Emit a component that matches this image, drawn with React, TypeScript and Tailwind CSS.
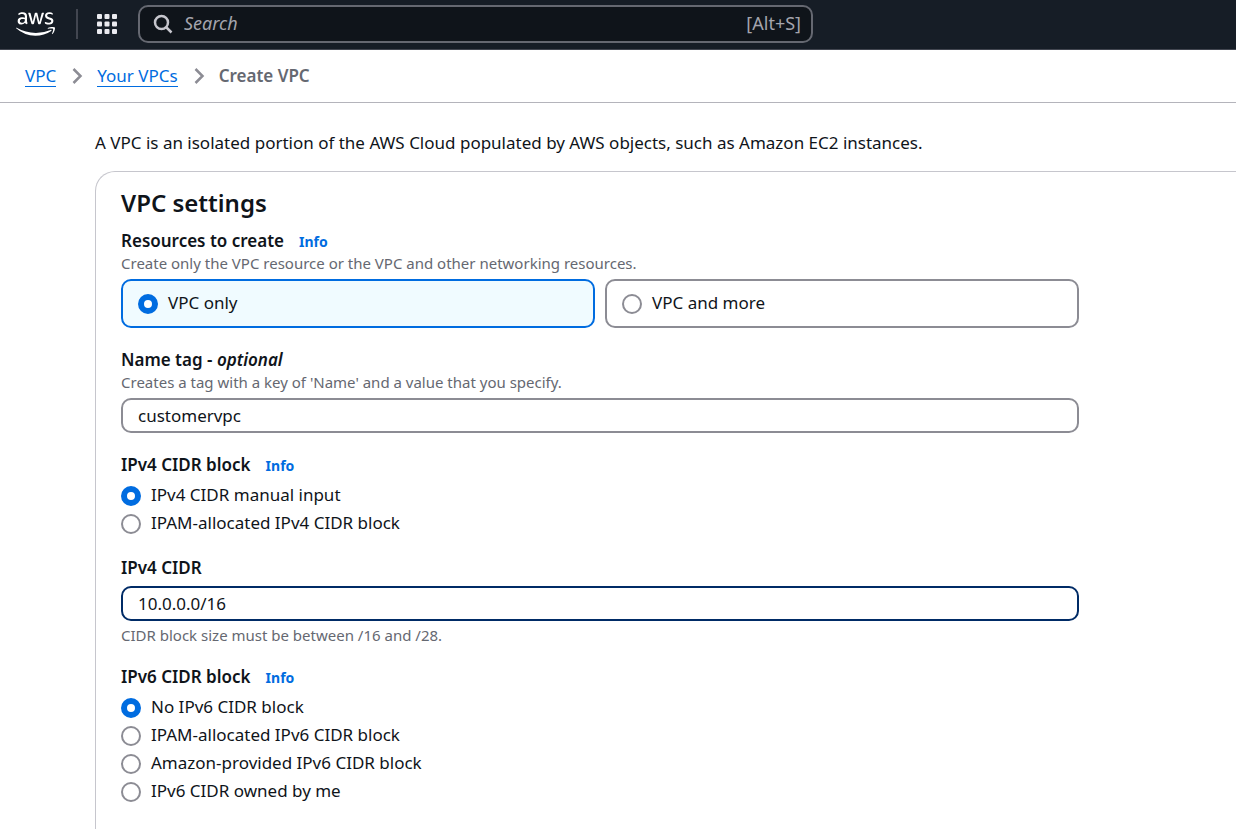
import { useState, type ReactNode } from "react";
import { FaAws } from "react-icons/fa";

function Info() {
  return (
    <a href="#info" className="pt-0.5 text-sm leading-[22px] font-bold text-[#006ce0]">
      Info
    </a>
  );
}

function Heading({ id, htmlFor, children, info }: { id?: string; htmlFor?: string; children: ReactNode; info?: boolean }) {
  return (
    <div className="flex h-6 items-center gap-[15px]">
      {htmlFor ? (
        <label htmlFor={htmlFor} className="leading-6 font-semibold">
          {children}
        </label>
      ) : (
        <span id={id} className="leading-6 font-semibold">
          {children}
        </span>
      )}
      {info && <Info />}
    </div>
  );
}

const radioClass =
  "size-5 shrink-0 appearance-none rounded-full border-2 border-[#8c8c94] bg-white checked:border-6 checked:border-[#006ce0]";

function Tile({ label, checked, onSelect }: { label: string; checked: boolean; onSelect: () => void }) {
  return (
    <label
      className={
        "flex h-[49px] items-center gap-[10px] rounded-[10px] border-2 px-[15px] " +
        (checked ? "border-[#006ce0] bg-[#f0fbff]" : "border-[#8c8c94] bg-white")
      }
    >
      <input type="radio" name="resources" className={radioClass} checked={checked} onChange={onSelect} />
      <span className="pb-0.5 leading-6">{label}</span>
    </label>
  );
}

function RadioList({ name, labelledBy, options }: { name: string; labelledBy: string; options: string[] }) {
  const [value, setValue] = useState(options[0]);
  return (
    <div role="radiogroup" aria-labelledby={labelledBy} className="mt-[5px]">
      {options.map((o) => (
        <label key={o} className="flex h-7 items-center gap-[10px]">
          <input type="radio" name={name} className={radioClass} checked={value === o} onChange={() => setValue(o)} />
          <span className="pb-0.5 leading-6">{o}</span>
        </label>
      ))}
    </div>
  );
}

function Chevron() {
  return (
    <svg viewBox="0 0 12 18" className="h-[18px] w-3" fill="none" stroke="#8c8c94" strokeWidth="2.5" aria-hidden="true">
      <path d="M2.5 2l7 7-7 7" />
    </svg>
  );
}

export default function App() {
  const [resource, setResource] = useState("VPC only");
  return (
    <div className="flex h-screen flex-col overflow-hidden bg-white font-['Noto_Sans',sans-serif] text-[17px] text-[#0f141a]">
      <header className="flex h-[50px] shrink-0 items-center border-b border-[#424650] bg-[#161d26] pb-px pl-4">
        <a href="#home" aria-label="AWS home" className="text-white">
          <FaAws className="h-8 w-[39px]" />
        </a>
        <div className="ml-[21px] h-[30px] w-0.5 bg-[#424650]" />
        <button type="button" aria-label="Services" className="ml-[19px]">
          <svg viewBox="0 0 20 20" className="size-5" fill="#ebebf0">
            {[0, 7.5, 15].map((y) => [0, 7.5, 15].map((x) => <rect key={`${x}-${y}`} x={x} y={y} width="5" height="5" rx="1" />))}
          </svg>
        </button>
        <div className="ml-[21px] flex h-[38px] w-[675px] items-center rounded-[10px] border-2 border-[#656871] bg-[#0f141a] pr-2.5 pl-[13px]">
          <svg viewBox="0 0 20 20" className="size-5 shrink-0" fill="none" stroke="#c6c6cd" strokeWidth="2.5" aria-hidden="true">
            <circle cx="8.5" cy="8.5" r="6.5" />
            <path d="M13 13l5.5 5.5" />
          </svg>
          <input
            type="search"
            aria-label="Search"
            placeholder="Search"
            className="ml-[11px] min-w-0 flex-1 bg-transparent pb-0.5 text-lg leading-6 text-white outline-none placeholder:text-[#a4a4ad] placeholder:italic"
          />
          <span className="pb-0.5 text-lg leading-6 text-[#a4a4ad]">[Alt+S]</span>
        </div>
      </header>

      <nav aria-label="Breadcrumb" className="flex h-[53px] shrink-0 items-center border-b border-[#b4b4bb] pl-[25px]">
        <a href="#vpc" className="border-b border-[#006ce0] leading-5 text-[#006ce0]">
          VPC
        </a>
        <span className="mr-3.5 ml-[15px]">
          <Chevron />
        </span>
        <a href="#vpcs" className="border-b border-[#006ce0] leading-5 text-[#006ce0]">
          Your VPCs
        </a>
        <span className="mr-3.5 ml-[15px]">
          <Chevron />
        </span>
        <span className="leading-5 font-semibold text-[#656871]">Create VPC</span>
      </nav>

      <main className="min-h-0 flex-1 pl-[95px]">
        <p className="pt-7 pb-4 leading-6">
          A VPC is an isolated portion of the AWS Cloud populated by AWS objects, such as Amazon EC2 instances.
        </p>
        <form className="rounded-tl-[20px] border-t border-l border-[#c6c6cd] pt-[15px] pl-[25px]">
          <div className="max-w-[958px]">
            <h1 className="text-2xl leading-8 font-semibold">VPC settings</h1>

            <section className="mt-2.5">
              <Heading id="resources-label" info>
                Resources to create
              </Heading>
              <p className="text-[15px] leading-5 text-[#656871]">
                Create only the VPC resource or the VPC and other networking resources.
              </p>
              <div role="radiogroup" aria-labelledby="resources-label" className="mt-1.5 grid grid-cols-2 gap-[10px]">
                {["VPC only", "VPC and more"].map((l) => (
                  <Tile key={l} label={l} checked={resource === l} onSelect={() => setResource(l)} />
                ))}
              </div>
            </section>

            <section className="mt-5">
              <Heading htmlFor="name-tag">
                Name tag - <em>optional</em>
              </Heading>
              <p className="text-[15px] leading-5 text-[#656871]">
                Creates a tag with a key of 'Name' and a value that you specify.
              </p>
              <input
                id="name-tag"
                type="text"
                defaultValue="customervpc"
                className="mt-1.5 block h-[35px] w-full rounded-[10px] border-2 border-[#8c8c94] px-[15px] outline-none"
              />
            </section>

            <section className="mt-5">
              <Heading id="ipv4-label" info>
                IPv4 CIDR block
              </Heading>
              <RadioList
                name="ipv4"
                labelledBy="ipv4-label"
                options={["IPv4 CIDR manual input", "IPAM-allocated IPv4 CIDR block"]}
              />
            </section>

            <section className="mt-[18px]">
              <Heading htmlFor="ipv4-cidr">IPv4 CIDR</Heading>
              <input
                id="ipv4-cidr"
                type="text"
                defaultValue="10.0.0.0/16"
                className="mt-1.5 block h-[35px] w-full rounded-[10px] border-2 border-[#002b66] px-[15px] outline-none"
              />
              <p className="mt-1 text-[15px] leading-5 text-[#656871]">CIDR block size must be between /16 and /28.</p>
            </section>

            <section className="mt-5">
              <Heading id="ipv6-label" info>
                IPv6 CIDR block
              </Heading>
              <RadioList
                name="ipv6"
                labelledBy="ipv6-label"
                options={[
                  "No IPv6 CIDR block",
                  "IPAM-allocated IPv6 CIDR block",
                  "Amazon-provided IPv6 CIDR block",
                  "IPv6 CIDR owned by me",
                ]}
              />
            </section>

            <section className="mt-[18px]">
              <Heading id="tenancy-label">Tenancy</Heading>
            </section>
          </div>
        </form>
      </main>
    </div>
  );
}
